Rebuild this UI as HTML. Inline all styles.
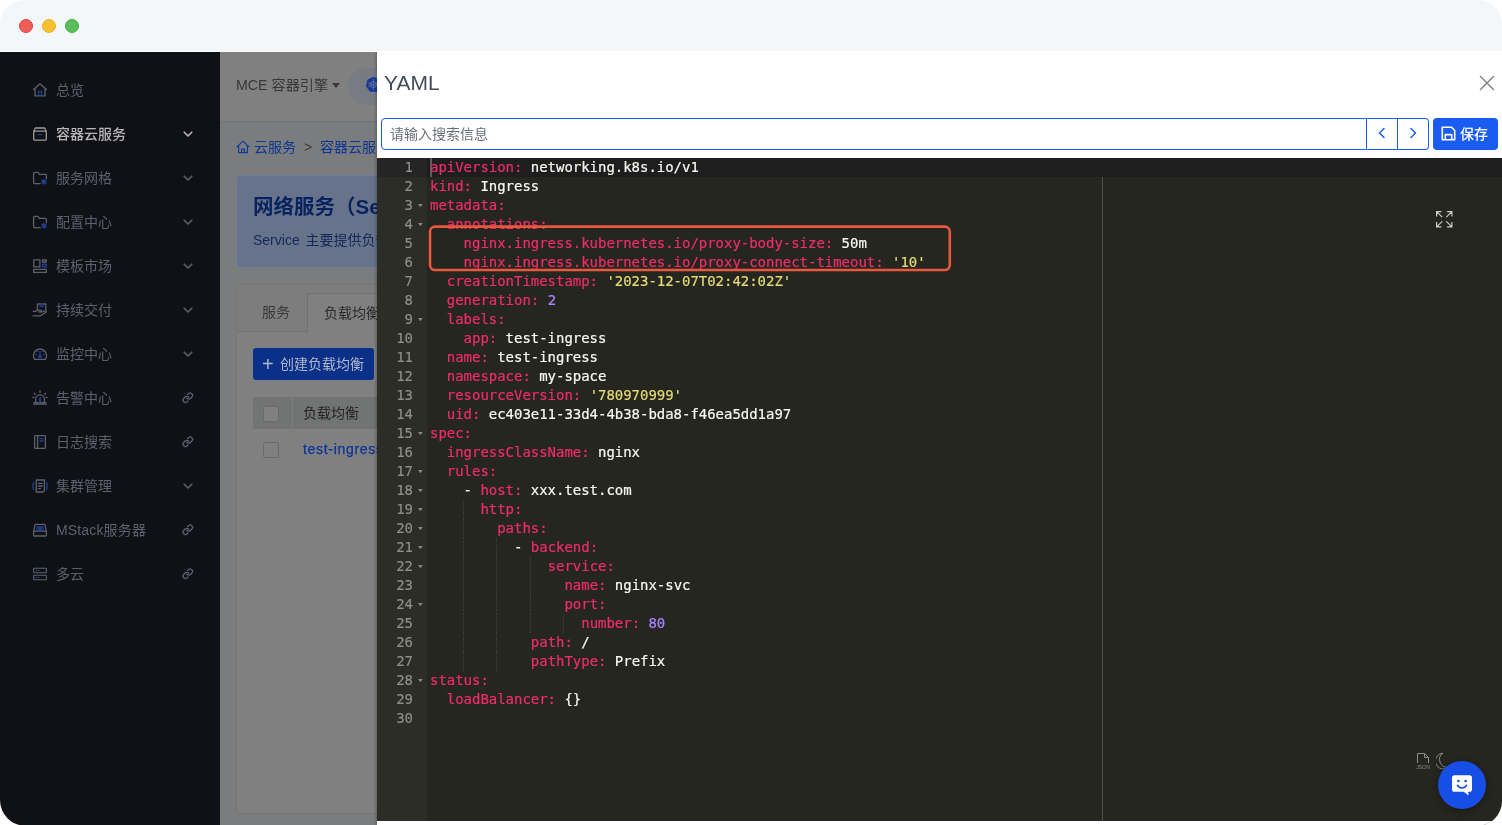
<!DOCTYPE html>
<html lang="zh-CN">
<head>
<meta charset="utf-8">
<title>YAML</title>
<style>
*{box-sizing:border-box;margin:0;padding:0}
html,body{width:1502px;height:825px;background:#fff;overflow:hidden}
body{font-family:"Liberation Sans","Noto Sans CJK SC",sans-serif;font-size:14px;position:relative}
#clip{will-change:transform;position:absolute;left:0;top:0;width:1502px;height:825.5px;overflow:hidden;border-radius:24px 24px 25px 26px;background:#fff}
#win{position:absolute;left:0;top:0;width:1502px;height:825px;background:#fff}
#titlebar{z-index:5;position:absolute;left:0;top:0;width:1502px;height:52px;background:#f4f7fa;border-bottom:1px solid #fff}
.dot{position:absolute;top:19px;width:14px;height:14px;border-radius:50%;border:1px solid}
#sidebar{position:absolute;left:0;top:52px;width:220px;height:773px;background:#101116}
.mi{position:absolute;left:0;width:220px;height:44px;color:#5d616c;font-size:14px;line-height:44px}
.mi .tx{position:absolute;left:56px;top:0;white-space:nowrap}
.mi svg.ic{position:absolute;left:32px;top:14px;width:16px;height:16px}
.mi svg.ar{position:absolute;left:181px;top:15px;width:14px;height:14px}
.mi svg.lk{left:182px;top:16px;width:11.5px;height:11.5px}
.mi.act{color:#b6b6b6}
.mi.act svg.ic{color:#9c9c9c}
.mi.act .tx{font-weight:500}
#content{position:absolute;left:220px;top:52px;width:1282px;height:773px;background:#7b7c7e;overflow:hidden}
#topbar{position:absolute;left:0;top:0;width:1282px;height:69px;background:#808080;box-shadow:0 1px 2px rgba(0,0,0,.08)}
#drawer{position:absolute;left:377px;top:52px;width:1125px;height:773px;background:#fff;box-shadow:-1px 0 3px rgba(0,0,0,.28)}
#editor{position:absolute;left:0;top:106px;width:1125px;height:663px;background:#252620;overflow:hidden;font-family:"DejaVu Sans Mono","Liberation Mono",monospace;font-size:14px;line-height:19px;letter-spacing:-0.029px}
#gutter{position:absolute;left:0;top:0;width:50px;height:663px;background:#2c2d27;color:#8f908a}

#topbar .prod{position:absolute;left:16px;top:0;line-height:66px;font-size:14.2px;color:#383838;white-space:nowrap}
#topbar .caret{position:absolute;left:112px;top:31px;width:0;height:0;border-left:4px solid transparent;border-right:4px solid transparent;border-top:5px solid #3a3a3a}
#topbar .pill{position:absolute;left:128px;top:16px;width:200px;height:37px;border-radius:19px;background:#787b84}
#bc{position:absolute;left:16px;top:85px;height:20px;line-height:20px;font-size:14px;color:#0d3592;white-space:nowrap}
#bc svg{position:absolute;left:0;top:3px;width:14px;height:14px}
#bc .a{position:absolute;left:18px}
#bc .s{position:absolute;left:68px;color:#3c3c3c}
#bc .b{position:absolute;left:84px}
#banner{position:absolute;left:16px;top:123px;width:1250px;height:93px;background:#67738b;border:1px solid #6f7fa0;border-radius:4px}
#banner h1{position:absolute;left:16px;top:15px;font-size:20.5px;line-height:32px;font-weight:700;color:#09225f;white-space:nowrap}
#banner p{position:absolute;left:16px;top:53px;font-size:14px;line-height:22px;color:#14295a;white-space:nowrap;word-spacing:2px}
#card{position:absolute;left:16px;top:232px;width:1250px;height:530px;background:#808080;border:1px solid #757575;border-radius:4px}
#tabs{position:absolute;left:0;top:0;width:1248px;height:47px;background:#7d7d7d;border-bottom:1px solid #727272;border-radius:4px 4px 0 0}
#tabs .t1{position:absolute;left:0;top:8px;width:71px;height:38px;line-height:39px;text-align:left;padding-left:25px;color:#3a3a3a;font-size:14px;border-right:1px solid #727272}
#tabs .t2{position:absolute;left:70px;top:8px;width:120px;height:40px;line-height:38px;padding-left:16px;color:#2a2a2a;font-size:14px;background:#808080;border:1px solid #727272;border-bottom:none;border-radius:4px 4px 0 0;white-space:nowrap}
#newbtn{position:absolute;left:16px;top:63px;width:121px;height:32px;line-height:32px;background:#0b3089;border-radius:3px;color:#b0b8cb;font-size:14px;white-space:nowrap}
#newbtn .p{position:absolute;left:9px;top:0;font-size:20px;font-weight:400}
#newbtn .l{position:absolute;left:27px;top:0}
#thead{position:absolute;left:16px;top:112px;width:1216px;height:32px;background:#727373;line-height:32px;color:#232323;font-size:14px}
#thead .sep{position:absolute;left:39px;top:0;width:1px;height:32px;background:#7d7d7d}
.cb{position:absolute;left:26px;width:16px;height:16px;background:#808080;border:1px solid #6a6a6a;border-radius:2px}
#thead .h{position:absolute;left:50px;top:0}
#row1{position:absolute;left:66px;top:153px;line-height:22px;font-size:14px;color:#0b3496;white-space:nowrap;letter-spacing:.7px;-webkit-text-stroke:.25px}

#dtitle{position:absolute;left:7px;top:16px;font-size:21px;line-height:30px;color:#434b5c;white-space:nowrap}
#dclose{position:absolute;left:1102px;top:23px;width:16px;height:16px}
#sin{position:absolute;left:4px;top:66px;width:986px;height:32px;border:1px solid #1b5cf2;border-radius:4px 0 0 4px;background:#fff;line-height:30px;padding-left:8px;color:#6b6f76;font-size:14px;white-space:nowrap}
.nb{position:absolute;top:66px;height:32px;border:1px solid #1b5cf2;border-left:none;background:#fff}
.nb svg{position:absolute;left:9px;top:8px;width:12px;height:12px}
#save{position:absolute;left:1056px;top:66px;width:65px;height:32px;border-radius:4px;background:#1a5cf0;color:#fff;font-size:14px;line-height:32px;white-space:nowrap}
#save svg{position:absolute;left:8px;top:8px;width:15px;height:15px}
#save span{position:absolute;left:27px;top:0;font-weight:500}
.gl{-webkit-text-stroke:0.15px;height:19px;text-align:right;padding-right:14px;position:relative;white-space:nowrap}
.ga{background:#252525}
.fw{position:absolute;left:40.6px;top:7.6px;width:5.6px;height:3.6px;background:#85867f;clip-path:polygon(0 0,100% 0,50% 100%)}
#actline{position:absolute;left:50px;top:0;width:1075px;height:19px;background:#1e1e1e}
#cur{position:absolute;left:53px;top:0;width:2px;height:19px;background:#5c5c59}
#pm{position:absolute;left:725px;top:19px;width:1px;height:644px;background:#4b4c47}
#hl{position:absolute;left:50px;top:65px;width:530px;height:52px}
#code{position:absolute;left:53px;top:0;margin:0;font:inherit;letter-spacing:inherit;color:#f8f8f2;white-space:pre;-webkit-text-stroke:0.2px}
.ln{height:19px;white-space:pre}
.k{color:#f02b6f}.s{color:#e6db74}.n{color:#ae81ff}.t{color:#f8f8f2}
.ig{display:inline-block;height:19px;vertical-align:top;background:repeating-linear-gradient(to bottom,#42433d 0,#42433d 1px,transparent 1px,transparent 2px) right/1px 100% no-repeat}
#fs{position:absolute;left:1059px;top:53px;width:16.5px;height:16.5px}
#jsn{position:absolute;left:1038px;top:594px;width:16px;height:18px}
#moon{position:absolute;left:1059px;top:594px;width:14px;height:18px}
#chat{position:absolute;left:1438px;top:761px;width:48px;height:48px;border-radius:50%;background:#174fe6;box-shadow:0 2px 8px rgba(0,0,0,.35)}
#chat svg{position:absolute;left:13px;top:13px;width:22px;height:22px}
</style>
</head>
<body>
<div id="clip"><div id="win">
<div id="titlebar">
<svg style="position:absolute;left:16px;top:16px;width:66px;height:20px" viewBox="0 0 66 20"><circle cx="10" cy="10" r="6.5" fill="#ed5f58" stroke="#ec4038" stroke-width="1"/><circle cx="33" cy="10" r="6.5" fill="#f3c130" stroke="#f4b41a" stroke-width="1"/><circle cx="56" cy="10" r="6.5" fill="#5bbd5b" stroke="#36b238" stroke-width="1"/></svg>
</div>
<div id="sidebar">
<div class="mi" style="top:16px"><svg class="ic" viewBox="0 0 16 16" fill="none" stroke="currentColor" stroke-width="1.3" stroke-linecap="round" stroke-linejoin="round"><path d="M1.5 7.6 8 1.8l6.5 5.8"/><path d="M3 6.6v7.2h10V6.6"/><path d="M6.6 13.6V9.4h2.8v4.2" stroke="#1c3f96"/></svg><span class="tx">总览</span></div>
<div class="mi act" style="top:60px"><svg class="ic" viewBox="0 0 16 16" fill="none" stroke="currentColor" stroke-width="1.3" stroke-linecap="round" stroke-linejoin="round"><path d="M1.7 5.2 3.4 2h9.2l1.7 3.2"/><rect x="1.7" y="5.2" width="12.6" height="9" rx="1.2"/><path d="M6 8.6h4" stroke="#1c3f96"/></svg><span class="tx">容器云服务</span><svg class="ar" viewBox="0 0 14 14" fill="none" stroke="currentColor" stroke-width="1.3" stroke-linecap="round" stroke-linejoin="round"><path d="M3.2 5.2 7 9l3.8-3.8" stroke-width="1.6"/></svg></div>
<div class="mi" style="top:104px"><svg class="ic" viewBox="0 0 16 16" fill="none" stroke="currentColor" stroke-width="1.3" stroke-linecap="round" stroke-linejoin="round"><path d="M8.2 13.6H2.6a1 1 0 0 1-1-1V3.4a1 1 0 0 1 1-1h3.2l1.7 1.9h5.9a1 1 0 0 1 1 1v3.2"/><circle cx="12" cy="11.800" r="1.500" stroke="#1c3f96" stroke-width="1.700"/><path d="M12 9v5.600M9.600 10.400l4.800 2.800M14.400 10.400l-4.800 2.800" stroke="#1c3f96" stroke-width=".9"/></svg><span class="tx">服务网格</span><svg class="ar" viewBox="0 0 14 14" fill="none" stroke="currentColor" stroke-width="1.3" stroke-linecap="round" stroke-linejoin="round"><path d="M3.2 5.2 7 9l3.8-3.8" stroke-width="1.6"/></svg></div>
<div class="mi" style="top:148px"><svg class="ic" viewBox="0 0 16 16" fill="none" stroke="currentColor" stroke-width="1.3" stroke-linecap="round" stroke-linejoin="round"><path d="M8.2 13.6H2.6a1 1 0 0 1-1-1V3.4a1 1 0 0 1 1-1h3.2l1.7 1.9h5.9a1 1 0 0 1 1 1v3.2"/><circle cx="12" cy="11.800" r="1.500" stroke="#1c3f96" stroke-width="1.700"/><path d="M12 9v5.600M9.600 10.400l4.800 2.800M14.400 10.400l-4.800 2.800" stroke="#1c3f96" stroke-width=".9"/></svg><span class="tx">配置中心</span><svg class="ar" viewBox="0 0 14 14" fill="none" stroke="currentColor" stroke-width="1.3" stroke-linecap="round" stroke-linejoin="round"><path d="M3.2 5.2 7 9l3.8-3.8" stroke-width="1.6"/></svg></div>
<div class="mi" style="top:192px"><svg class="ic" viewBox="0 0 16 16" fill="none" stroke="currentColor" stroke-width="1.3" stroke-linecap="round" stroke-linejoin="round"><rect x="1.7" y="1.8" width="6.2" height="7" /><rect x="10.6" y="1.8" width="3.7" height="2.2"/><rect x="10.6" y="6.2" width="3.7" height="2.6" stroke="#1c3f96" stroke-width="1.5"/><path d="M1.700 11.4h12.600v3H1.700z"/></svg><span class="tx">模板市场</span><svg class="ar" viewBox="0 0 14 14" fill="none" stroke="currentColor" stroke-width="1.3" stroke-linecap="round" stroke-linejoin="round"><path d="M3.2 5.2 7 9l3.8-3.8" stroke-width="1.6"/></svg></div>
<div class="mi" style="top:236px"><svg class="ic" viewBox="0 0 16 16" fill="none" stroke="currentColor" stroke-width="1.3" stroke-linecap="round" stroke-linejoin="round"><path d="M5.400 7.600V2h8.400v6"/><rect x="8.200" y="2" width="3" height="2.400" stroke="#1c3f96" stroke-width="1.400"/><path d="M1.200 9.400h2.200l2-1.200h3.400c1.100 0 1.100 1.700 0 1.700H6.800"/><path d="M9.600 10l3.600-1.200c1-.3 1.500.9.700 1.400L8.400 13.800H1.200"/></svg><span class="tx">持续交付</span><svg class="ar" viewBox="0 0 14 14" fill="none" stroke="currentColor" stroke-width="1.3" stroke-linecap="round" stroke-linejoin="round"><path d="M3.2 5.2 7 9l3.8-3.8" stroke-width="1.6"/></svg></div>
<div class="mi" style="top:280px"><svg class="ic" viewBox="0 0 16 16" fill="none" stroke="currentColor" stroke-width="1.3" stroke-linecap="round" stroke-linejoin="round"><path d="M2.6 13.4A6.6 6.6 0 1 1 13.4 13.4z"/><path d="M8 9.2V5.4" stroke="#1c3f96"/><circle cx="8" cy="10.4" r="1.2" fill="#1c3f96" stroke="#1c3f96"/><path d="M4 8.4h.1M5.2 5.6h.1M10.8 5.6h.1M12 8.4h.1"/></svg><span class="tx">监控中心</span><svg class="ar" viewBox="0 0 14 14" fill="none" stroke="currentColor" stroke-width="1.3" stroke-linecap="round" stroke-linejoin="round"><path d="M3.2 5.2 7 9l3.8-3.8" stroke-width="1.6"/></svg></div>
<div class="mi" style="top:324px"><svg class="ic" viewBox="0 0 16 16" fill="none" stroke="currentColor" stroke-width="1.3" stroke-linecap="round" stroke-linejoin="round"><path d="M3.6 12.6V9.2a4.4 4.4 0 0 1 8.8 0v3.4"/><path d="M1.6 14.2h12.8M2 12.6h12"/><path d="M8 1v1.4M2.2 3.2l1 1M13.8 3.2l-1 1M.8 7.4h1.2M14 7.4h1.2"/><path d="M8.6 7.4 7 10h2L7.6 12.2" stroke="#1c3f96"/></svg><span class="tx">告警中心</span><svg class="ar lk" viewBox="0 0 24 24" fill="none" stroke="currentColor" stroke-width="2.8" stroke-linecap="round" stroke-linejoin="round"><path d="M10 13a5 5 0 0 0 7.540.540l3-3a5 5 0 0 0-7.070-7.070l-1.720 1.710"/><path d="M14 11a5 5 0 0 0-7.540-.540l-3 3a5 5 0 0 0 7.070 7.070l1.710-1.710"/></svg></div>
<div class="mi" style="top:368px"><svg class="ic" viewBox="0 0 16 16" fill="none" stroke="currentColor" stroke-width="1.3" stroke-linecap="round" stroke-linejoin="round"><rect x="2.6" y="1.6" width="10.8" height="12.8" rx="1"/><path d="M5.6 1.6v12.8"/><path d="M8 4.6h3M8 7h3" stroke="#1c3f96"/></svg><span class="tx">日志搜索</span><svg class="ar lk" viewBox="0 0 24 24" fill="none" stroke="currentColor" stroke-width="2.8" stroke-linecap="round" stroke-linejoin="round"><path d="M10 13a5 5 0 0 0 7.540.540l3-3a5 5 0 0 0-7.070-7.070l-1.720 1.710"/><path d="M14 11a5 5 0 0 0-7.540-.540l-3 3a5 5 0 0 0 7.070 7.070l1.710-1.710"/></svg></div>
<div class="mi" style="top:412px"><svg class="ic" viewBox="0 0 16 16" fill="none" stroke="currentColor" stroke-width="1.3" stroke-linecap="round" stroke-linejoin="round"><path d="M4.2 2h8.2v10.6a1.4 1.4 0 0 1-1.4 1.4H4.2z"/><path d="M6.4 5.4h3.8M6.4 8h3.8M6.4 10.6h2"/><path d="M1.6 4.4c-.9 2.4-.9 4.8 0 7.2M14.6 4.4c.9 2.4.9 4.8 0 7.2" stroke="#1c3f96"/></svg><span class="tx">集群管理</span><svg class="ar" viewBox="0 0 14 14" fill="none" stroke="currentColor" stroke-width="1.3" stroke-linecap="round" stroke-linejoin="round"><path d="M3.2 5.2 7 9l3.8-3.8" stroke-width="1.6"/></svg></div>
<div class="mi" style="top:456px"><svg class="ic" viewBox="0 0 16 16" fill="none" stroke="currentColor" stroke-width="1.3" stroke-linecap="round" stroke-linejoin="round"><path d="M1.6 9.2 3.2 2.4h9.6l1.6 6.8"/><rect x="1.6" y="9.2" width="12.8" height="4.8" rx=".8"/><rect x="4.6" y="5" width="6.8" height="2.6" rx="1.3" stroke="#1c3f96"/><path d="M7 6.3h2" stroke="#1c3f96"/></svg><span class="tx" style="letter-spacing:.15px">MStack服务器</span><svg class="ar lk" viewBox="0 0 24 24" fill="none" stroke="currentColor" stroke-width="2.8" stroke-linecap="round" stroke-linejoin="round"><path d="M10 13a5 5 0 0 0 7.540.540l3-3a5 5 0 0 0-7.070-7.070l-1.720 1.710"/><path d="M14 11a5 5 0 0 0-7.540-.540l-3 3a5 5 0 0 0 7.070 7.070l1.710-1.710"/></svg></div>
<div class="mi" style="top:500px"><svg class="ic" viewBox="0 0 16 16" fill="none" stroke="currentColor" stroke-width="1.3" stroke-linecap="round" stroke-linejoin="round"><rect x="1.600" y="2.200" width="12.800" height="4.600" rx=".5" stroke-width="1.100"/><rect x="1.600" y="9.200" width="12.800" height="4.600" rx=".5" stroke-width="1.100"/><path d="M3.800 4.500h1M6 4.500h1M3.800 11.500h1M6 11.500h1" stroke="#1c3f96" stroke-width="1.100"/></svg><span class="tx">多云</span><svg class="ar lk" viewBox="0 0 24 24" fill="none" stroke="currentColor" stroke-width="2.8" stroke-linecap="round" stroke-linejoin="round"><path d="M10 13a5 5 0 0 0 7.540.540l3-3a5 5 0 0 0-7.070-7.070l-1.720 1.710"/><path d="M14 11a5 5 0 0 0-7.540-.540l-3 3a5 5 0 0 0 7.070 7.070l1.710-1.710"/></svg></div>
</div>
<div id="content">
<div id="topbar"><span class="prod">MCE 容器引擎</span><i class="caret"></i><div class="pill"><svg style="position:absolute;left:17px;top:8px;width:17px;height:17px" viewBox="0 0 20 20"><path d="M10 .8 17.2 4.3 19 12.1 14 18.4H6L1 12.1 2.8 4.3z" fill="#17399a"/><circle cx="10" cy="10" r="3.600" fill="none" stroke="#6d7896" stroke-width="1.100"/><path d="M10 3.400v13.200M3.600 8l12.800 4M3.600 12l12.800-4" stroke="#6d7896" stroke-width=".9"/></svg></div></div>
<div id="bc"><svg viewBox="0 0 15 15" fill="none" stroke="#0f3b9c" stroke-width="1.3" stroke-linejoin="round" stroke-linecap="round"><path d="M1 7.4 7.5 1.2 14 7.4"/><path d="M2.8 6v7.6h9.4V6"/><path d="M6 13.4v-3.6h3v3.6"/></svg><span class="a">云服务</span><span class="s">&gt;</span><span class="b">容器云服务</span></div>
<div id="banner"><h1>网络服务（Service）</h1><p>Service 主要提供负载均衡和服务自动发现。</p></div>
<div id="card"><div id="tabs"><div class="t1">服务</div><div class="t2">负载均衡</div></div>
<div id="newbtn"><span class="p">+</span><span class="l">创建负载均衡</span></div>
<div id="thead"><i class="sep"></i><span class="h">负载均衡</span></div>
<i class="cb" style="top:121px"></i><i class="cb" style="top:157px"></i>
<span id="row1">test-ingress</span>
</div>
</div>
<div id="drawer">
<div id="dtitle">YAML</div>
<svg id="dclose" viewBox="0 0 16 16" fill="none" stroke="#8a8a8a" stroke-width="1.6" stroke-linecap="round"><path d="M1.5 1.5l13 13M14.5 1.5l-13 13"/></svg>
<div id="sin">请输入搜索信息</div>
<div class="nb" style="left:990px;width:31px"><svg viewBox="0 0 12 12" fill="none" stroke="#1b5cf2" stroke-width="1.5" stroke-linecap="round" stroke-linejoin="round"><path d="M8 1.5 3.5 6 8 10.5"/></svg></div>
<div class="nb" style="left:1021px;width:31px;border-radius:0 4px 4px 0"><svg viewBox="0 0 12 12" fill="none" stroke="#1b5cf2" stroke-width="1.5" stroke-linecap="round" stroke-linejoin="round"><path d="M4 1.5 8.5 6 4 10.5"/></svg></div>
<div id="save"><svg viewBox="0 0 14 14" fill="none" stroke="#fff" stroke-width="1.5" stroke-linejoin="round"><path d="M1.2 1.2h8.6l3 3v8.6H1.2z"/><path d="M4 12.6V8h6v4.6"/></svg><span>保存</span></div>
<div id="editor">
<div id="gutter"><div class="gl ga">1</div><div class="gl">2</div><div class="gl">3<i class="fw"></i></div><div class="gl">4<i class="fw"></i></div><div class="gl">5</div><div class="gl">6</div><div class="gl">7</div><div class="gl">8</div><div class="gl">9<i class="fw"></i></div><div class="gl">10</div><div class="gl">11</div><div class="gl">12</div><div class="gl">13</div><div class="gl">14</div><div class="gl">15<i class="fw"></i></div><div class="gl">16</div><div class="gl">17<i class="fw"></i></div><div class="gl">18<i class="fw"></i></div><div class="gl">19<i class="fw"></i></div><div class="gl">20<i class="fw"></i></div><div class="gl">21<i class="fw"></i></div><div class="gl">22<i class="fw"></i></div><div class="gl">23</div><div class="gl">24<i class="fw"></i></div><div class="gl">25</div><div class="gl">26</div><div class="gl">27</div><div class="gl">28<i class="fw"></i></div><div class="gl">29</div><div class="gl">30</div></div>
<div id="actline"></div><div id="cur"></div><div id="pm"></div>

<pre id="code"><div class="ln"><span class="k">apiVersion:</span><span class="t"> networking.k8s.io/v1</span></div><div class="ln"><span class="k">kind:</span><span class="t"> Ingress</span></div><div class="ln"><span class="k">metadata:</span></div><div class="ln">  <span class="k">annotations:</span></div><div class="ln">    <span class="k">nginx.ingress.kubernetes.io/proxy-body-size:</span><span class="t"> 50m</span></div><div class="ln">    <span class="k">nginx.ingress.kubernetes.io/proxy-connect-timeout:</span><span class="t"> </span><span class="s">'10'</span></div><div class="ln">  <span class="k">creationTimestamp:</span><span class="t"> </span><span class="s">'2023-12-07T02:42:02Z'</span></div><div class="ln">  <span class="k">generation:</span><span class="t"> </span><span class="n">2</span></div><div class="ln">  <span class="k">labels:</span></div><div class="ln">    <span class="k">app:</span><span class="t"> test-ingress</span></div><div class="ln">  <span class="k">name:</span><span class="t"> test-ingress</span></div><div class="ln">  <span class="k">namespace:</span><span class="t"> my-space</span></div><div class="ln">  <span class="k">resourceVersion:</span><span class="t"> </span><span class="s">'780970999'</span></div><div class="ln">  <span class="k">uid:</span><span class="t"> ec403e11-33d4-4b38-bda8-f46ea5dd1a97</span></div><div class="ln"><span class="k">spec:</span></div><div class="ln">  <span class="k">ingressClassName:</span><span class="t"> nginx</span></div><div class="ln">  <span class="k">rules:</span></div><div class="ln">    <span class="t">- </span><span class="k">host:</span><span class="t"> xxx.test.com</span></div><div class="ln"><span class="ig">    </span>  <span class="k">http:</span></div><div class="ln"><span class="ig">    </span>    <span class="k">paths:</span></div><div class="ln"><span class="ig">    </span><span class="ig">    </span>  <span class="t">- </span><span class="k">backend:</span></div><div class="ln"><span class="ig">    </span><span class="ig">    </span><span class="ig">    </span>  <span class="k">service:</span></div><div class="ln"><span class="ig">    </span><span class="ig">    </span><span class="ig">    </span>    <span class="k">name:</span><span class="t"> nginx-svc</span></div><div class="ln"><span class="ig">    </span><span class="ig">    </span><span class="ig">    </span>    <span class="k">port:</span></div><div class="ln"><span class="ig">    </span><span class="ig">    </span><span class="ig">    </span><span class="ig">    </span>  <span class="k">number:</span><span class="t"> </span><span class="n">80</span></div><div class="ln"><span class="ig">    </span><span class="ig">    </span>    <span class="k">path:</span><span class="t"> /</span></div><div class="ln"><span class="ig">    </span><span class="ig">    </span>    <span class="k">pathType:</span><span class="t"> Prefix</span></div><div class="ln"><span class="k">status:</span></div><div class="ln">  <span class="k">loadBalancer:</span><span class="t"> {}</span></div><div class="ln"></div></pre>
<svg id="hl" viewBox="0 0 530 52"><rect x="3" y="3.6" width="519.8" height="43.4" rx="5" fill="none" stroke="#e9573f" stroke-width="2.6"/></svg>
<svg id="fs" viewBox="0 0 16.5 16.5" fill="none" stroke="#cdcdcd" stroke-width="1.15" stroke-linecap="butt"><path d="M.6 5.400V.6h4.800M.8.800 6.200 6.200M11.100.600h4.800v4.800M15.700.800 10.300 6.200M.6 11.100v4.800h4.800M.8 15.700 6.200 10.300M15.900 11.100v4.800h-4.800M15.700 15.700 10.300 10.300"/></svg>
<svg id="jsn" viewBox="0 0 16 18" fill="none" stroke="#8c8c86" stroke-width="1"><path d="M2.5 11V1.5h7l4 4V11"/><path d="M9.5 1.5v4h4"/><text x="8" y="17.3" font-family="Liberation Sans,sans-serif" font-size="5.2" text-anchor="middle" fill="#8c8c86" stroke="none">JSON</text></svg>
<svg id="moon" viewBox="0 0 14 18" fill="none" stroke="#8c8c86" stroke-width="1"><path d="M7 1.2A7.6 7.6 0 0 0 12.6 15 7.9 7.9 0 1 1 7 1.200z"/></svg>
</div>
</div>
<div id="chat"><svg viewBox="0 0 22 22"><path d="M3.6 1.2h14.8A2.6 2.6 0 0 1 21 3.800v11.400a2.600 2.600 0 0 1-2.600 2.600h-1.200l.4 3.600-4.800-3.600H3.600A2.600 2.600 0 0 1 1 15.200V3.800a2.600 2.600 0 0 1 2.600-2.600z" fill="#fff"/><circle cx="7.4" cy="7" r="1.3" fill="#174fe6"/><circle cx="14.6" cy="7" r="1.3" fill="#174fe6"/><path d="M6.400 11.200a5.200 5.200 0 0 0 9.200 0" fill="none" stroke="#174fe6" stroke-width="1.500" stroke-linecap="round"/></svg></div>
</div></div>
</body>
</html>
